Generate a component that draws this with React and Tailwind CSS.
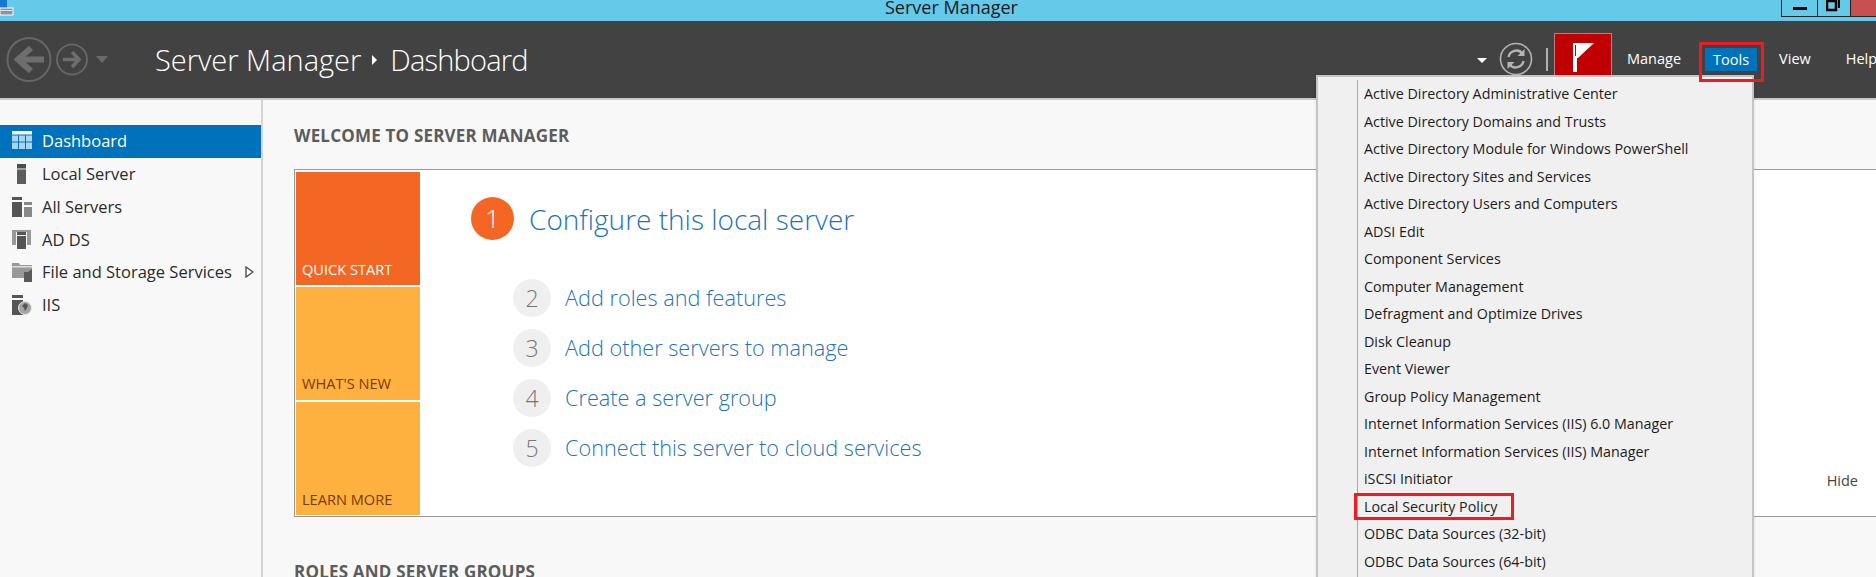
const sideItems = [
  { label: "Dashboard", icon: "dashboard", active: true },
  { label: "Local Server", icon: "local" },
  { label: "All Servers", icon: "all" },
  { label: "AD DS", icon: "adds" },
  { label: "File and Storage Services", icon: "file", arrow: true },
  { label: "IIS", icon: "iis" },
];

const tools = [
  "Active Directory Administrative Center",
  "Active Directory Domains and Trusts",
  "Active Directory Module for Windows PowerShell",
  "Active Directory Sites and Services",
  "Active Directory Users and Computers",
  "ADSI Edit",
  "Component Services",
  "Computer Management",
  "Defragment and Optimize Drives",
  "Disk Cleanup",
  "Event Viewer",
  "Group Policy Management",
  "Internet Information Services (IIS) 6.0 Manager",
  "Internet Information Services (IIS) Manager",
  "iSCSI Initiator",
  "Local Security Policy",
  "ODBC Data Sources (32-bit)",
  "ODBC Data Sources (64-bit)",
];

const steps = [
  ["2", "Add roles and features"],
  ["3", "Add other servers to manage"],
  ["4", "Create a server group"],
  ["5", "Connect this server to cloud services"],
];

function SideIcon({ name }) {
  return (
    <svg width="20" height="20" viewBox="0 0 20 20" className="shrink-0">
      {name === "dashboard" && (
        <>
          <rect x="0" y="0" width="20" height="3.5" fill="#fff" />
          <path d="M0 4.5h6v6H0zM7 4.5h6v6H7zM14 4.5h6v6h-6zM0 11.5h6V18H0zM7 11.5h6V18H7zM14 11.5h6V18h-6z" fill="#a9d5ef" />
        </>
      )}
      {name === "local" && (
        <>
          <rect x="5" y="0" width="9" height="4" fill="#4c4c4c" />
          <rect x="5" y="4" width="9" height="2" fill="#a0a0a0" />
          <rect x="5" y="6" width="9" height="14" fill="#5c5c5c" />
        </>
      )}
      {name === "all" && (
        <>
          <rect x="0" y="0" width="10" height="3" fill="#555" />
          <rect x="0" y="5" width="10" height="15" fill="#555" />
          <rect x="12" y="5" width="8" height="3" fill="#888" />
          <rect x="12" y="10" width="8" height="10" fill="#888" />
        </>
      )}
      {name === "adds" && (
        <>
          <path d="M0 1h4v15H0zM15 1h4v15h-4zM0 1h19v2H0z" fill="#999" />
          <rect x="5" y="3" width="9" height="3" fill="#555" />
          <rect x="5" y="7" width="9" height="13" fill="#555" />
        </>
      )}
      {name === "file" && (
        <>
          <path d="M0 1h7l1 2h12v13H0z" fill="#999" />
          <rect x="0" y="4" width="20" height="1.5" fill="#ddd" />
          <path d="M12 10h4l4-3v13h-8z" fill="#5a5a5a" />
        </>
      )}
      {name === "iis" && (
        <>
          <rect x="0" y="0" width="11" height="3" fill="#555" />
          <rect x="0" y="5" width="11" height="15" fill="#555" />
          <circle cx="13" cy="13" r="6.5" fill="#a4a4a4" stroke="#e8e8e8" />
          <path d="M10 11l3-3 3 2-1 3-2 3-1-3z" fill="#555" />
        </>
      )}
    </svg>
  );
}

function CaptionButtons() {
  return (
    <div className="ml-auto flex h-[17px] shrink-0 border-b border-l border-[#222]">
      <div className="flex w-[36px] items-center justify-center border-r border-[#222]">
        <div className="mt-[1px] h-[3px] w-[14px] bg-black" />
      </div>
      <div className="flex w-[33px] justify-center border-r border-[#222]">
        <svg width="16" height="12" viewBox="0 0 16 12">
          <path d="M1 1h9v9H1z" fill="none" stroke="#000" strokeWidth="2.5" />
          <path d="M13 0v8" stroke="#000" strokeWidth="2" />
        </svg>
      </div>
      <div className="w-[25px] bg-[#c75050]" />
    </div>
  );
}

export default function App() {
  return (
    <div className="relative flex h-[577px] w-[1876px] flex-col overflow-hidden bg-[#f8f8f8] font-['Open_Sans',sans-serif]">
      {/* title bar */}
      <div className="relative flex h-[21px] shrink-0 items-start overflow-hidden bg-[#65c9ea]">
        <svg width="14" height="16" viewBox="0 0 14 16" className="shrink-0">
          <rect x="0" y="0" width="7" height="8" fill="#1878d0" />
          <rect x="0" y="8" width="13" height="7" fill="#8a94a0" stroke="#fff" />
          <rect x="1" y="10" width="11" height="1" fill="#dfe6ea" />
        </svg>
        <span className="ml-[871px] mt-[-3px] text-[18px] leading-[21px] text-[#1a1a1a]">Server Manager</span>
        <CaptionButtons />
      </div>

      {/* header */}
      <div className="flex h-[77px] shrink-0 overflow-hidden bg-[#424242]">
        <div className="ml-[6px] mt-[15px] flex h-[47px] w-[1471px] shrink-0 items-center">
          <svg width="46" height="47" viewBox="0 0 46 47" className="shrink-0">
            <circle cx="23" cy="23.5" r="21.5" fill="none" stroke="#666" strokeWidth="2" />
            <path d="M38 23.5H16M25 12L12 23.5 25 35" fill="none" stroke="#6e6e6e" strokeWidth="6" />
          </svg>
          <svg width="32" height="33" viewBox="0 0 32 33" className="ml-[4px] shrink-0">
            <circle cx="16" cy="16.5" r="15" fill="none" stroke="#666" strokeWidth="2" />
            <path d="M7 16.5h15M16 9l7 7.5-7 7.5" fill="none" stroke="#6e6e6e" strokeWidth="3.5" />
          </svg>
          <div className="ml-[8px] h-0 w-0 shrink-0 border-x-[6px] border-t-[7px] border-x-transparent border-t-[#6a6a6a]" />
          <span className="ml-[47px] text-[29px] font-light text-white">Server Manager</span>
          <div className="ml-[11px] h-0 w-0 shrink-0 border-y-[5px] border-l-[5px] border-y-transparent border-l-white" />
          <span className="ml-[13px] text-[29px] font-light tracking-[-0.8px] text-white">Dashboard</span>
        </div>

        <div className="flex shrink-0 items-start">
          <div className="mt-[37px] h-0 w-0 shrink-0 border-x-[5px] border-t-[5px] border-x-transparent border-t-white" />
          <svg width="34" height="34" viewBox="0 0 34 34" className="ml-[12px] mt-[21px] shrink-0">
            <circle cx="17" cy="17" r="15.5" fill="none" stroke="#b5b5b5" strokeWidth="1.6" />
            <path d="M9.5 15a8 8 0 0 1 14-3.5M24.5 19a8 8 0 0 1-14 3.5" fill="none" stroke="#b5b5b5" strokeWidth="2.4" />
            <path d="M25.5 7v7h-7zM8.5 27v-7h7z" fill="#b5b5b5" />
          </svg>
          <div className="ml-[13px] mt-[27px] h-[23px] w-[2px] shrink-0 bg-[#b0b0b0]" />
          <div className="ml-[6px] mt-[12px] h-[50px] w-[58px] shrink-0 border border-[#b98080] bg-[#c00000]">
            <svg width="24" height="30" viewBox="0 0 24 30" className="ml-[18px] mt-[9px]">
              <rect x="0" y="0" width="4" height="29" fill="#fff" />
              <path d="M4 0h17L5 15H4z" fill="#fff" />
              <rect x="2" y="2" width="1" height="11" fill="#c00000" />
            </svg>
          </div>
          <span className="ml-[15px] mt-[27px] text-[14.5px] leading-[22px] text-white">Manage</span>
          <span className="ml-[24px] mt-[27px] flex h-[23px] w-[52px] items-center justify-center bg-[#0072bc] text-[14.5px] text-white">Tools</span>
          <span className="ml-[22px] mt-[27px] text-[14.5px] leading-[22px] text-white">View</span>
          <span className="ml-[35px] mt-[27px] text-[14.5px] leading-[22px] text-white">Help</span>
        </div>
      </div>

      {/* body */}
      <div className="flex min-h-0 flex-1 border-t-2 border-[#c9c9c9]">
        <aside className="w-[263px] shrink-0 border-r-2 border-[#d4d4d4] pt-[25px]">
          {sideItems.map((item) => (
            <div
              key={item.label}
              className={`flex h-[32.7px] items-center whitespace-nowrap pl-[12px] text-[16.5px] ${item.active ? "w-[261px] bg-[#0072bc] text-white" : "text-[#2a2a2a]"}`}
            >
              <SideIcon name={item.icon} />
              <span className="ml-[10px] pt-[1px]">{item.label}</span>
              {item.arrow && (
                <svg width="9" height="12" viewBox="0 0 9 12" className="ml-[13px] shrink-0">
                  <path d="M1 1l7 5-7 5z" fill="#fff" stroke="#444" strokeWidth="1.3" />
                </svg>
              )}
            </div>
          ))}
        </aside>

        <main className="min-w-0 flex-1 pl-[31px]">
          <h2 className="mt-[25px] text-[17px] font-bold leading-[22px] tracking-[0.2px] text-[#5c5c5c]">WELCOME TO SERVER MANAGER</h2>
          <div className="mt-[22px] flex h-[348px] border-y border-l border-[#999] bg-white pb-[1px] pl-[1px] pt-[2px]">
            <div className="flex w-[124px] shrink-0 flex-col gap-[2px]">
              <div className="flex flex-1 items-end bg-[#f46623] px-[6px] pb-[4px] text-[14.6px] text-white">QUICK START</div>
              <div className="flex flex-1 items-end bg-[#ffb13f] px-[6px] pb-[5px] text-[14.6px] text-[#7a3a0c]">WHAT'S NEW</div>
              <div className="flex flex-1 items-end bg-[#ffb13f] px-[6px] pb-[4px] text-[14.6px] text-[#7a3a0c]">LEARN MORE</div>
            </div>
            <div className="ml-[51px] mt-[25px] shrink-0">
              <div className="flex items-center">
                <div className="flex h-[43px] w-[43px] items-center justify-center rounded-full bg-[#f46623] text-[26px] font-light text-white">1</div>
                <span className="ml-[15px] text-[28px] font-light text-[#1e74b9]">Configure this local server</span>
              </div>
              <div className="ml-[42px] mt-[39px] flex flex-col gap-[12px]">
                {steps.map(([n, text]) => (
                  <div key={n} className="flex h-[38px] items-center">
                    <div className="flex h-[38px] w-[38px] items-center justify-center rounded-full bg-[#efefef] text-[23px] font-light text-[#777]">{n}</div>
                    <span className="ml-[14px] text-[21.7px] font-light text-[#1e74b9]">{text}</span>
                  </div>
                ))}
              </div>
            </div>
            <div className="mb-[23px] ml-auto mr-[18px] self-end text-[14.5px] text-[#444]">Hide</div>
          </div>
          <h2 className="mt-[44px] text-[17px] font-bold leading-[22px] tracking-[0.2px] text-[#5c5c5c]">ROLES AND SERVER GROUPS</h2>
        </main>
      </div>

      {/* tools menu */}
      <div className="absolute bottom-0 left-[1316px] top-[75px] w-[438px] border-x-2 border-t-2 border-[#c4c4c4] bg-[#f0f0f0] pl-[39px] pt-[3px] shadow-sm">
        <div className="h-full border-l border-[#a8a8a8] pl-[6px]">
          {tools.map((t) => (
            <div key={t} className="flex h-[27.5px] items-center whitespace-nowrap text-[14.3px] text-[#1c1c1c]">
              {t}
            </div>
          ))}
        </div>
      </div>

      {/* red annotation boxes */}
      <div className="absolute left-[1699px] top-[42px] h-[40px] w-[65px] border-[3.5px] border-[#ed1c24]" />
      <div className="absolute left-[1354px] top-[493px] h-[27px] w-[160px] border-[3px] border-[#ed1c24]" />
    </div>
  );
}
